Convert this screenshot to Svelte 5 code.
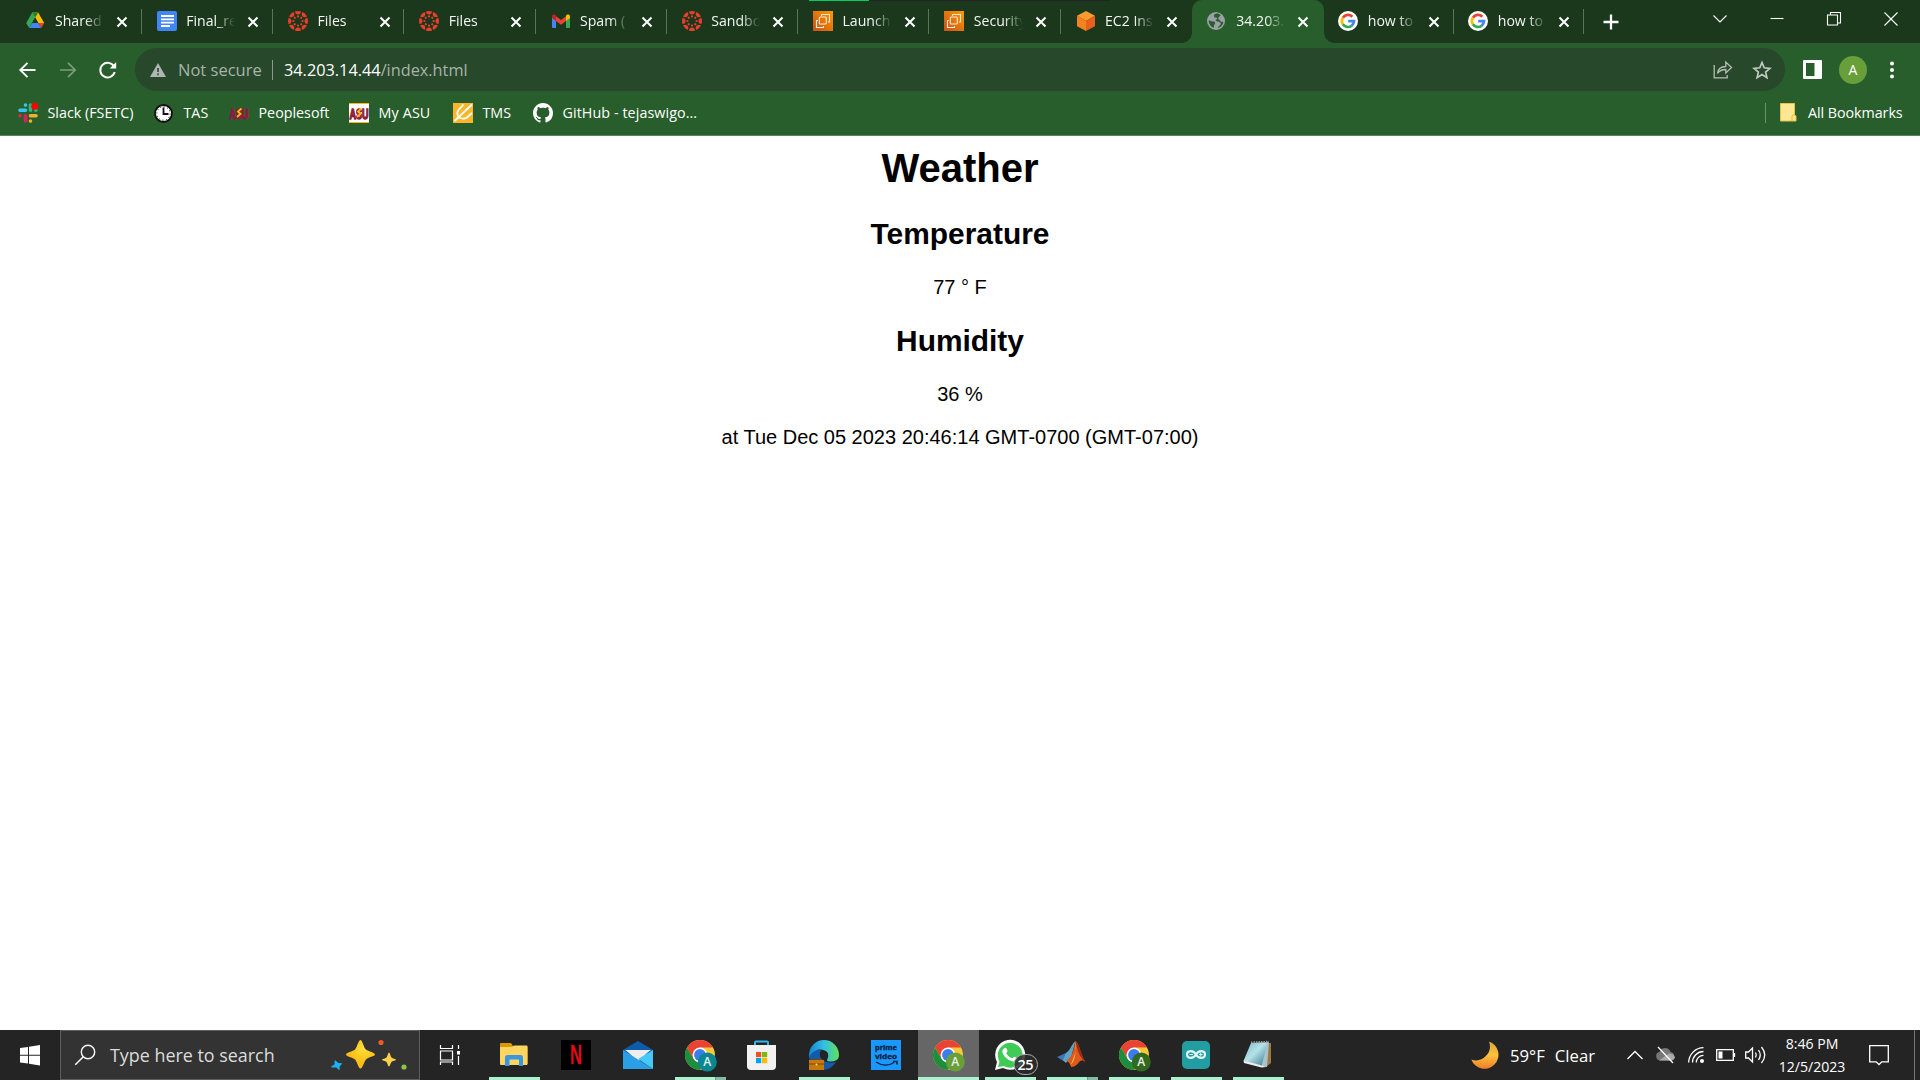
<script>
  const tabs = [
    { icon: 'drive', title: 'Shared' },
    { icon: 'docs', title: 'Final_re' },
    { icon: 'canvas', title: 'Files' },
    { icon: 'canvas', title: 'Files' },
    { icon: 'gmail', title: 'Spam (' },
    { icon: 'canvas', title: 'Sandbo' },
    { icon: 'aws', title: 'Launch' },
    { icon: 'aws', title: 'Security' },
    { icon: 'cube', title: 'EC2 Ins' },
    { icon: 'globe', title: '34.203.', active: true },
    { icon: 'google', title: 'how to' },
    { icon: 'google', title: 'how to' }
  ];

  const bookmarks = [
    { icon: 'slack', label: 'Slack (FSETC)', width: 136 },
    { icon: 'clock', label: 'TAS', width: 75 },
    { icon: 'asu', label: 'Peoplesoft', width: 120 },
    { icon: 'asuwhite', label: 'My ASU', width: 104 },
    { icon: 'tms', label: 'TMS', width: 80 },
    { icon: 'github', label: 'GitHub - tejaswigo...', width: 180 }
  ];

  const apps = [
    { icon: 'explorer', open: true },
    { icon: 'netflix' },
    { icon: 'mail' },
    { icon: 'chrome', badge: '#0b8793', open: true, stacked: true },
    { icon: 'store' },
    { icon: 'edge', open: true },
    { icon: 'prime' },
    { icon: 'chrome', badge: '#689f38', open: true, active: true },
    { icon: 'whatsapp', open: true },
    { icon: 'matlab', open: true, stacked: true },
    { icon: 'chrome', badge: '#33691e', open: true },
    { icon: 'arduino', open: true },
    { icon: 'notepad', open: true }
  ];

  const spokes = [0, 45, 90, 135, 180, 225, 270, 315];
</script>

{#snippet favicon(name)}
  <svg class="fav" width="20" height="20" viewBox="0 0 20 20">
    {#if name === 'drive'}
      <g transform="translate(-.8 -.6)">
        <path d="M7 2 1 12.500l3 5L10 7z" fill="#34a853" />
        <path d="M7 2h6l6 10.500h-6z" fill="#fbbc04" />
        <path d="M7 2h6l-3 5z" fill="#188038" />
        <path d="m10 7.200 3 5.300H7z" fill="#1b381c" />
        <path d="M7 12.500h6l3 5H4z" fill="#4285f4" />
        <path d="M13 12.500h6l-3 5z" fill="#ea4335" />
      </g>
    {:else if name === 'docs'}
      <rect width="20" height="20" rx="2" fill="#4285f4" />
      <path d="M4 5h13M4 8.300h13M4 11.700h13M4 15h9" stroke="#fff" stroke-width="1.800" />
    {:else if name === 'canvas'}
      {#each spokes as a}
        <g transform="rotate({a} 10 10)">
          <path d="M6.900.500a10 10 0 0 1 6.200 0C12.800 4.500 7.200 4.500 6.900.500" fill="#ee3d2c" />
          <circle cx="10" cy="5.400" r="1.100" fill="#ee3d2c" />
        </g>
      {/each}
    {:else if name === 'gmail'}
      <path d="M1 5v11a1 1 0 0 0 1 1h3V8z" fill="#4285f4" />
      <path d="M19 5v11a1 1 0 0 1-1 1h-3V8z" fill="#34a853" />
      <path d="M5 5.300 10 9l5-3.700V10l-5 3.800L5 10z" fill="#ea4335" />
      <path d="M1 5.500c0-2 2.300-2.400 3.400-1.500L5 4.500V10L1 7z" fill="#c5221f" />
      <path d="M19 5.500c0-2-2.300-2.400-3.400-1.500l-.6.500V10l4-3z" fill="#fbbc04" />
    {:else if name === 'aws'}
      <defs>
        <linearGradient id="awsfill" x1="0" y1="1" x2="1" y2="0">
          <stop offset="0" stop-color="#c8511b" /><stop offset="1" stop-color="#f90" />
        </linearGradient>
      </defs>
      <rect width="20" height="20" fill="url(#awsfill)" />
      <g fill="none" stroke="#ffe9d0" stroke-width="1.100">
        <path d="M8.500 5V3.500h8V11H15" /><rect x="6.300" y="6" width="7" height="7" rx="1" />
        <path d="M5 9.500H3.500v7h7V15" />
      </g>
    {:else if name === 'cube'}
      <path d="m10 0 9 4.800L10 10 1 4.800z" fill="#fb9a2d" />
      <path d="M1 4.800 10 10v10l-9-4.800z" fill="#f58220" />
      <path d="M19 4.800 10 10v10l9-4.800z" fill="#e8601c" />
    {:else if name === 'globe'}
      <circle cx="9" cy="10" r="9" fill="#9aa0a6" />
      <path d="M10.500 2.300C8 2.500 6.500 4 7 5.500c.4 1.200 1.800 1 2.800 1.300.8.300.4 1.500-.4 1.800-1.200.4-.6 1.700.6 1.800 1.700.1 3.600.3 3.800 2 .1 1.300-1 1.800-1.800 2.700-.6.700-.8 1.300-1.700 2 3.300-.4 5.700-3 6-6-1.500-.2-2.500-.2-3.300-1.500-.7-1.300-1.700-1-1.700-2.300 0-1.200 1.600-1.800 2.400-3-.9-1-2-1.700-3.200-2M1.700 9.500c0 3.500 2 6.200 5 7.300.5-1.300.1-1.800.5-2.800.5-1.200 1.400-1.700.8-2.800-.6-1-1.700-.7-2.700-.8-1.400-.2-1.800-1-3.600-.9" fill="#285e2c" />
    {:else if name === 'google'}
      <circle cx="10" cy="10" r="10" fill="#fff" />
      <g fill="none" stroke-width="2.700">
        <path d="M4.900 6.700A6 6 0 0 1 14.300 5.800" stroke="#ea4335" />
        <path d="M4.900 6.700a6 6 0 0 0 0 6.600" stroke="#fbbc05" />
        <path d="M4.900 13.300a6 6 0 0 0 8.600 1.500" stroke="#34a853" />
        <path d="M10.200 10.200H16a6 6 0 0 1-2.500 4.600" stroke="#4285f4" />
      </g>
    {:else if name === 'slack'}
      <g stroke-linecap="round" stroke-width="3.600">
        <path d="M2 7.200h5.500M7.500 2v.1" stroke="#36c5f0" />
        <path d="M12.500 7.200V2M17.800 7.200h.1" stroke="#2eb67d" />
        <path d="M12.500 12.800H18M12.500 18v.1" stroke="#ecb22e" />
        <path d="M7.500 12.800V18M2 12.800h.1" stroke="#e01e5a" />
      </g>
      <circle cx="16.700" cy="3.300" r="3.500" fill="#f00" />
    {:else if name === 'clock'}
      <circle cx="9.500" cy="10.500" r="8.500" fill="#fff" stroke="#111" stroke-width="1.800" />
      <circle cx="9.500" cy="10.500" r="6.700" fill="none" stroke="#111" stroke-width="1" stroke-dasharray="1 2.500" />
      <path d="M9.500 4.500v6.500h5" fill="none" stroke="#111" stroke-width="1.800" />
    {:else if name === 'asu' || name === 'asuwhite'}
      {#if name === 'asuwhite'}
        <rect width="20" height="20" fill="#fff" />
        <path d="M0 .500h20M0 19.500h20" stroke="#ffb310" />
      {/if}
      <text x=".5" y="15.500" textLength="19" lengthAdjust="spacingAndGlyphs" class="asu">ASU</text>
      <path d="m12.500 5.500-3.500 3 2.500 2.500-3.500 3" fill="none" stroke="#ffb310" stroke-width="1.800" />
    {:else if name === 'tms'}
      <rect width="20" height="20" fill="#fdb52a" />
      <g stroke="#fff" stroke-width="1.800" fill="none">
        <path d="M1.500 18 19 1.500" />
        <path d="M10.500 1.500 5.500 7q-2 2.500-.5 6.500" />
        <path d="M19 10l-5 4.500q-4 2.500-9-.5" />
      </g>
    {:else if name === 'github'}
      <path transform="scale(1.250)" fill="#fff" d="M8 0C3.580 0 0 3.580 0 8c0 3.540 2.290 6.530 5.470 7.590.4.070.55-.17.55-.38 0-.19-.01-.82-.01-1.490-2.010.37-2.530-.49-2.690-.94-.09-.23-.48-.94-.82-1.130-.28-.15-.68-.52-.01-.53.63-.01 1.080.58 1.230.82.72 1.210 1.870.87 2.330.66.07-.52.28-.87.51-1.070-1.780-.2-3.640-.89-3.640-3.950 0-.87.31-1.590.82-2.150-.08-.2-.36-1.020.08-2.120 0 0 .67-.21 2.200.82.64-.18 1.320-.27 2-.27s1.360.09 2 .27c1.530-1.040 2.200-.82 2.200-.82.44 1.100.16 1.920.08 2.120.51.56.82 1.270.82 2.150 0 3.070-1.870 3.750-3.650 3.950.29.25.54.73.54 1.480 0 1.070-.01 1.930-.01 2.200 0 .21.15.46.55.38A8.010 8.010 0 0 0 16 8c0-4.420-3.580-8-8-8" />
    {/if}
  </svg>
{/snippet}

{#snippet appicon(app)}
  <svg class="appicon" width="34" height="34" viewBox="0 0 34 34">
    {#if app.icon === 'explorer'}
      <path d="M3 5q0-1 1-1h10l2 3h13q1.500 0 1.500 1.500V25H3z" fill="#d99b00" />
      <path d="M3 8h12l2-1.500h12.500q1 0 1 1V25q0 1-1 1H4q-1 0-1-1z" fill="#ffd562" />
      <path d="M8 27V18.500Q8 16 10.500 16h13q2.500 0 2.500 2.500V27h-4v-6.500H12.500V27z" fill="#3a96dd" />
    {:else if app.icon === 'netflix'}
      <rect x="2" y="1" width="30" height="30" />
      <text x="11" y="25" textLength="12" lengthAdjust="spacingAndGlyphs" class="netflix">N</text>
    {:else if app.icon === 'mail'}
      <path d="M2 11 17 2l15 9v8H2z" fill="#0c5cab" />
      <path d="M5 11h24L17 23z" fill="#eee" />
      <path d="M2 11 32 30H2z" fill="#2b9fe6" />
      <path d="M32 11v19L17 20z" fill="#45c8fa" />
      <path d="M4 11h26L17 19.500z" fill="#eee" />
    {:else if app.icon === 'chrome'}
      <circle cx="17" cy="16" r="15" fill="#fcc934" />
      <path d="M4 8.500A15 15 0 0 1 30 8.500H17L10.500 19.800z" fill="#ea4335" />
      <path d="M4 8.500a15 15 0 0 0 13 22.500l6.500-11.300-13 .1z" fill="#1e8e3e" />
      <circle cx="17" cy="16" r="7.500" fill="#fff" />
      <circle cx="17" cy="16" r="5.900" fill="#3b7ded" />
      <circle cx="24.300" cy="23" r="9.500" fill={app.badge} />
      <text x="24.300" y="27.300" text-anchor="middle" class="letter">A</text>
    {:else if app.icon === 'store'}
      <path d="M10 8V3.500q0-1 1-1h11q1 0 1 1V8" fill="none" stroke="#30b6ec" stroke-width="2" />
      <path d="M2 6h29v21q0 4-4 4H6q-4 0-4-4z" fill="#f2f2f2" />
      <path d="M11 13h5.200v5.200H11z" fill="#f25022" /><path d="M17 13h5.200v5.200H17z" fill="#7fba00" />
      <path d="M11 19h5.200v5.200H11z" fill="#00a4ef" /><path d="M17 19h5.200v5.200H17z" fill="#ffb900" />
    {:else if app.icon === 'edge'}
      <defs>
        <linearGradient id="edgetop"><stop offset="0" stop-color="#1683d8" /><stop offset=".5" stop-color="#32bfe5" /><stop offset="1" stop-color="#62e256" /></linearGradient>
      </defs>
      <path d="M14 11c-4 7 3 15 15 12-3 5-8 8-13 8C8 31 3 26 2 18c1-5 7-8 12-7" fill="#135aa8" />
      <path d="M2 16a15 15 0 0 1 30 0c0 5-4 6.500-9 6.500-3 0-3.500-1-2.500-2.500C24 13 15 8 8 12c-3 1.500-5 3.500-6 7z" fill="url(#edgetop)" />
      <circle cx="17" cy="16" r="4" fill="#242424" />
      <rect x="2" y="21" width="15" height="10" fill="#c77a0c" />
      <path d="M2 25h15" stroke="#7d4500" /><path d="M5.500 21v-1.500h8V21" stroke="#7d4500" fill="none" />
      <circle cx="9.500" cy="25.500" r="1" fill="#ffe28a" />
    {:else if app.icon === 'prime'}
      <rect x="2" y="1" width="30" height="30" fill="#1a98ff" />
      <text x="6" y="11" textLength="22" lengthAdjust="spacingAndGlyphs" class="prime">prime</text>
      <text x="6" y="19.500" textLength="22" lengthAdjust="spacingAndGlyphs" class="prime">video</text>
      <path d="M7 23c6 4 13 4 18 .5M24 22.500h4v3" stroke="#06233d" stroke-width="1.500" fill="none" />
    {:else if app.icon === 'whatsapp'}
      <path d="M2 31 4 23A15 15 0 1 1 10 29z" fill="#fff" />
      <path d="M5 28 6.500 22.500A12.400 12.400 0 1 1 11 27z" fill="#3fcb55" />
      <path d="M11 9.500c1.500-1.500 2.700-.5 3.500 2.500.2 1-1.500 1.500-1 2.500 1.500 2.500 3 4 5.500 4.800 1 .3 1.500-2 2.500-1.600 3.500 1.400 3.500 2 2 3.800C20 25 9 18 9.300 12q.3-1.700 1.700-2.500" fill="#fff" />
      <rect x="21" y="15.500" width="23.500" height="20" rx="10" class="ring" />
      <text x="32.500" y="31" text-anchor="middle" textLength="16" class="count">25</text>
    {:else if app.icon === 'matlab'}
      <path d="m2 18 9-4 4 4-5 5z" fill="#3c78b8" />
      <path d="M11 14c4-2 5-8 9.500-12l-4 15-5.500 7-3-3z" fill="#5fa3c4" />
      <path d="M20.500 2c4 2 5 14 10 21-3-2-5-2-7 1-2 2-4 4-7.500 4-1-4-3-6-5-6 6-2 8-13 9.500-20" fill="#e0581c" />
      <path d="M20.500 2c2 7-1 16-5 24 4-3 6-12 5-24" fill="#ffc34d" />
      <path d="M20.500 2c4 2 5 14 10 21-4-3-8-9-10-21" fill="#972b13" />
    {:else if app.icon === 'arduino'}
      <rect x="3" y="2" width="28" height="28" rx="5" fill="#229ea3" />
      <path d="M17 15.500c-3-5-9-4-9 0s6 5 9 0 9-4 9 0-6 5-9 0z" fill="none" stroke="#e4f5f5" stroke-width="2.100" />
      <path d="M10.500 15.500h3.500M20 15.500h3.500M21.750 13.700v3.600" stroke="#e4f5f5" stroke-width="1" />
    {:else if app.icon === 'notepad'}
      <defs>
        <linearGradient id="noteface" x2="1" y2="1"><stop offset="0" stop-color="#77b9c7" /><stop offset=".45" stop-color="#b5e2ea" /><stop offset="1" stop-color="#2f7689" /></linearGradient>
      </defs>
      <path d="m27 4 3 0v20l-5 4z" fill="#9b7947" />
      <path d="m11 4 17-1-2 25-5-1z" fill="#a9c3c8" />
      <path d="M10 4 26.500 3.500 20.500 27 2.500 22z" fill="url(#noteface)" />
      <path d="m2.500 21.500 18.500 5 4.500 1.500-5 .5L3 24z" fill="#eee" />
      <path d="m10 3.500 18-.8" stroke="#999" stroke-width="2" stroke-dasharray="1.500 1" />
    {/if}
  </svg>
{/snippet}

<div class="desktop">
  <header class="browser">
    <div class="tabstrip">
      <div class="loading"></div>
      {#each tabs as tab, i}
        <div class="tab" class:active={tab.active} class:divided={!tab.active && i !== 8} class:narrow={i > 9}>
          {@render favicon(tab.icon)}
          <span class="title">{tab.title}</span>
          <svg class="close" width="12" height="12" viewBox="0 0 12 12"><path d="m1.500 1.500 9 9m0-9-9 9" stroke="#fff" stroke-width="2" /></svg>
        </div>
      {/each}
      <svg class="plus" width="16" height="16" viewBox="0 0 16 16"><path d="M8 .500v15M.500 8h15" stroke="#fff" stroke-width="2.300" /></svg>
      <div class="controls">
        <svg width="14" height="14" viewBox="0 0 14 14"><path d="m.500 3.500 6.500 6.500L13.500 3.500" /></svg>
        <svg width="14" height="14" viewBox="0 0 14 14"><path d="M.500 6.500h13" /></svg>
        <svg width="14" height="14" viewBox="0 0 14 14"><path d="M.500 3h10v10H.500zM3.500 3V.500h10v10.500h-3" /></svg>
        <svg width="14" height="14" viewBox="0 0 14 14"><path d="m.500 .500 13 13m0-13-13 13" /></svg>
      </div>
    </div>

    <div class="toolbar">
      <svg class="nav" width="18" height="18" viewBox="0 0 18 18"><path d="M16.500 9h-15m7-7.200L1.300 9l7.200 7.200" stroke="#fff" stroke-width="1.900" fill="none" /></svg>
      <svg class="nav" width="18" height="18" viewBox="0 0 18 18"><path d="M1 9h15M9 1.800 16.200 9 9 16.200" stroke="#7b9e7d" stroke-width="1.700" fill="none" /></svg>
      <svg class="nav" width="18" height="18" viewBox="0 0 18 18"><path d="M15 5.500A7.300 7.300 0 1 0 15.700 11" stroke="#fff" stroke-width="2" fill="none" /><path d="M17.200 1v6.500h-6.500z" fill="#fff" /></svg>
      <div class="omnibox">
        <svg width="16" height="14" viewBox="0 0 16 14"><path d="M8 0 16 14H0z" fill="#b0b6b0" /><path d="M8 5v4M8 10.500v1.700" stroke="#27482a" stroke-width="1.600" /></svg>
        <span class="warn">Not secure</span>
        <i class="bar"></i>
        <span class="url"><b>34.203.14.44</b>/index.html</span>
        <svg class="share" width="20" height="19" viewBox="0 0 20 19"><path d="M1.200 5v12.800h13V15M4.500 13.500C5 9 8 6.500 12.800 6.500V2L18.500 7.500 12.800 13V9.500C9 9.500 6.500 10.500 4.500 13.500z" stroke="#b4bdb5" stroke-width="1.300" fill="none" /></svg>
        <svg width="20" height="20" viewBox="0 0 20 20"><path d="m10 2.500 2.200 5.300 5.700.500-4.300 3.700 1.300 5.600-4.900-3-4.900 3L6.400 12 2.100 8.300l5.700-.5z" stroke="#c2c9c2" stroke-width="1.700" fill="none" /></svg>
      </div>
      <svg class="panel" width="19" height="19" viewBox="0 0 19 19"><path fill="#fff" fill-rule="evenodd" d="M1 0h17q1 0 1 1v17q0 1-1 1H1q-1 0-1-1V1q0-1 1-1m2 3v13h8.500V3z" /></svg>
      <span class="avatar">A</span>
      <svg width="6" height="18" viewBox="0 0 6 18"><g fill="#fff"><circle cx="3" cy="2.600" r="2" /><circle cx="3" cy="9" r="2" /><circle cx="3" cy="15.400" r="2" /></g></svg>
    </div>

    <nav class="bookmarks">
      {#each bookmarks as mark}
        <a class="mark" href="#top" style:width="{mark.width}px">{@render favicon(mark.icon)}<span>{mark.label}</span></a>
      {/each}
      <div class="all">
        <svg width="17" height="19" viewBox="0 0 17 19"><path d="M.500.500h14v11.500l1.500 1V18H.500z" fill="#ffe694" stroke="#e9c347" /><path d="M12 18v-4.500q0-1.500 1.500-1.500h1" fill="none" stroke="#e9b92c" /></svg>
        <span>All Bookmarks</span>
      </div>
    </nav>
  </header>

  <main>
    <h1>Weather</h1>
    <h2>Temperature</h2>
    <p>77 ° F</p>
    <h2>Humidity</h2>
    <p>36 %</p>
    <p>at Tue Dec 05 2023 20:46:14 GMT-0700 (GMT-07:00)</p>
  </main>

  <footer class="taskbar">
    <div class="start">
      <svg width="20" height="21" viewBox="0 0 20 21"><path fill="#fff" d="M0 3 8 1.900V9.700H0zM9 1.700 20 .1v9.600H9zM0 10.700h8v7.800l-8-1.100zM9 10.700h11v9.700L9 18.800z" /></svg>
    </div>
    <div class="search">
      <svg width="22" height="22" viewBox="0 0 22 22"><circle cx="13" cy="8" r="6.700" fill="none" stroke="#fff" stroke-width="1.400" /><path d="m8.300 12.800-8 8" stroke="#fff" stroke-width="1.500" /></svg>
      <span>Type here to search</span>
      <svg class="sparkle" width="76" height="32" viewBox="0 0 76 32">
        <defs><radialGradient id="gold" cx=".6" cy=".3"><stop offset="0" stop-color="#ffdf3e" /><stop offset="1" stop-color="#f9bd13" /></radialGradient></defs>
        <path d="M29.500 1c2 0 3 7.500 5.500 9.500s9 3 9 5-7 2.500-9 5-3.500 9-5.500 9-3.500-7-5.500-9-9-3-9-5 7-3 9-5 3.500-9.500 5.500-9.500" fill="url(#gold)" />
        <path d="M58 13.500c1 0 1.500 4 2.500 5s4.500 1.500 4.500 2.300-3.500 1.200-4.500 2.200-1.500 4.500-2.500 4.500-1.500-3.500-2.500-4.500-4.500-1.400-4.500-2.200 3.500-1.300 4.500-2.300 1.500-5 2.500-5" fill="#ffd04b" />
        <path d="M4 21.500c1-.4 2.500 2.300 3.500 2.600s3-.4 3.400.4-2.200 2.300-2.300 3.300.5 3-.3 3.300-2-2.200-3-2.500-4.700.4-5-.5 3-2 3.300-3-.6-3.300.4-3.600" fill="#18b2f5" />
        <circle cx="50" cy="3.500" r="2.600" fill="#f15a24" /><circle cx="73" cy="28" r="2.600" fill="#8bc53f" />
      </svg>
    </div>
    <div class="taskview">
      <svg width="20" height="20" viewBox="0 0 20 20" fill="none" stroke="#fff" stroke-width="1.200"><path d="M.500 0v3.500h12V0M.500 6h12v9H.500zM.500 20v-3h12v3M18.500 0v4M18.500 11v9" /><path d="M17 6h3v3.500h-3z" fill="#fff" stroke="none" /></svg>
    </div>
    {#each apps as app}
      <div class="app" class:open={app.open} class:stacked={app.stacked} class:current={app.active}>{@render appicon(app)}</div>
    {/each}
    <div class="tray">
      <svg width="28" height="28" viewBox="0 0 28 28">
        <defs><linearGradient id="moon" x2="0" y2="1"><stop offset="0" stop-color="#d9a441" /><stop offset=".5" stop-color="#fdc13b" /><stop offset="1" stop-color="#ee7d2b" /></linearGradient></defs>
        <path d="M18 .500A14 14 0 1 1 .300 18.500 14 14 0 0 0 18 .500" fill="url(#moon)" />
      </svg>
      <span class="weather"><span>59°F</span><span>Clear</span></span>
      <svg class="line caret" width="16" height="10" viewBox="0 0 16 10"><path d="m.500 9 7.500-7.500L15.500 9" /></svg>
      <svg class="cloud" width="20" height="18" viewBox="0 0 20 18"><path d="M5 14.500a4.500 4.500 0 0 1-.5-8.800A5.800 5.800 0 0 1 15.500 6a4.300 4.300 0 0 1 0 8.500z" fill="#777" /><path d="m4 14.500 10-7q5 0 6 4-1 3-4 3z" fill="#aaa" /><path d="m3 1 15 16" stroke="#fff" stroke-width="1.300" /></svg>
      <svg class="line wifi" width="16" height="16" viewBox="0 0 16 16"><path d="M.700 15.500A15 15 0 0 1 15.500.700M4.500 15.500a11 11 0 0 1 11-11M8.300 15.500a7.200 7.200 0 0 1 7.200-7.200" /><circle cx="14" cy="14" r="2" fill="#fff" stroke="none" /></svg>
      <svg class="line battery" width="20" height="12" viewBox="0 0 20 12"><path d="M.700.700h16.600v10.600H.700zM18.500 4v4" /><path d="M2.500 2.500h4v7h-4z" fill="#fff" stroke="none" /></svg>
      <svg class="line speaker" width="21" height="18" viewBox="0 0 21 18"><path d="M.700 6v6h2.800l4 4V2l-4 4zM10.500 6.500q1.500 2.500 0 5M13.500 4q3.500 5 0 10M16.500 1q6.500 8 0 16" /></svg>
      <span class="time"><span>8:46 PM</span><span>12/5/2023</span></span>
      <svg class="line note" width="20" height="20" viewBox="0 0 20 20"><path d="M.700.700h18.600v16.100h-6.500L10 19.500l-2.800-2.700H.700z" /></svg>
      <i class="edge"></i>
    </div>
  </footer>
</div>

<style>
  :global(body) { margin: 0; background: #fff; }
  .desktop { width: 1920px; height: 1080px; display: flex; flex-direction: column; overflow: hidden; font-family: 'Open Sans', 'Noto Sans', sans-serif; color: #fff; }
  svg { display: block; flex: none; overflow: visible; }

  .browser { flex: none; height: 135px; background: #285e2c; border-bottom: 1px solid #5c845f; }
  .tabstrip { position: relative; height: 43px; background: #1b381c; display: flex; align-items: center; padding-left: 10.500px; box-sizing: border-box; }
  .loading { position: absolute; top: 0; left: 809px; width: 301px; height: 1px; background: linear-gradient(90deg, #0c6 60px, #232428 60px); }
  .tab { position: relative; flex: none; width: 131.250px; height: 43px; padding: 0 0 1px 15px; box-sizing: border-box; display: flex; align-items: center; }
  .tab.divided::after { content: ''; position: absolute; right: 0; top: 9px; width: 1px; height: 25px; background: #5a745b; }
  .tab.active { width: 132.500px; background: #285e2c; border-radius: 10px 10px 0 0; }
  .tab.narrow { width: 130px; padding-left: 14px; }
  .tab.active::before, .tab.active::after { content: ''; position: absolute; bottom: 0; width: 10px; height: 10px; }
  .tab.active::before { left: -10px; background: radial-gradient(circle at 0 0, #1b381c 9.500px, #285e2c 10px); }
  .tab.active::after { right: -10px; background: radial-gradient(circle at 100% 0, #1b381c 9.500px, #285e2c 10px); }
  .title { width: 56px; margin-left: 9.500px; overflow: hidden; white-space: nowrap; font-size: 14.100px; line-height: 24px; color: #f4f7f4; mask-image: linear-gradient(90deg, #000 30px, transparent 49px); }
  .close { margin-left: 5px; margin-top: 1px; }
  .narrow .close { margin-left: 4px; }
  .plus { margin-left: 19px; }
  .controls { display: flex; margin-left: auto; margin-bottom: 5px; }
  .controls svg { margin: 0 21.600px; fill: none; stroke: #fff; stroke-width: 1.100; }

  .toolbar { height: 53px; display: flex; align-items: center; padding: 0 24.500px 0 18.500px; }
  .toolbar > .nav { margin-right: 22px; }
  .toolbar > .nav:nth-child(3) { margin-right: 18.500px; }
  .omnibox { width: 1650px; height: 43px; border-radius: 22px; background: #27482a; display: flex; align-items: center; box-sizing: border-box; padding: 0 13px 0 15px; font-size: 16.300px; color: #a8b4a9; white-space: nowrap; }
  .warn { margin-left: 12px; width: 94px; font-size: 16.500px; }
  .bar { width: 1px; height: 20px; margin-right: 11px; background: #8b9b8c; }
  .url b { font-weight: 400; color: #fff; }
  .share { margin-left: auto; margin-right: 19px; }
  .panel { margin-left: 18px; }
  .avatar { width: 28px; height: 28px; margin: 0 22px 0 17px; border-radius: 50%; background: #689f38; font-size: 14px; line-height: 28px; text-align: center; }

  .bookmarks { height: 33px; display: flex; align-items: center; padding: 0 18px; font-size: 14.300px; white-space: nowrap; }
  .mark { display: flex; align-items: center; gap: 9.500px; color: #fff; text-decoration: none; }
  .mark:nth-child(4) { letter-spacing: .15px; }
  .mark:nth-child(6) { letter-spacing: .08px; }
  .all { margin-left: auto; width: 137px; height: 20px; box-sizing: border-box; padding-left: 14px; border-left: 1px solid #6b936e; display: flex; align-items: center; gap: 11px; letter-spacing: -.05px; }
  .asu { font: bold 14px 'Liberation Sans', sans-serif; letter-spacing: 0; fill: #8c1d40; stroke: #8c1d40; stroke-width: 1.400px; }

  main { flex: 1; padding-top: 10px; color: #000; text-align: center; font: 20px 'Liberation Sans', Arial, sans-serif; }
  h1 { margin: 0 0 26px; font-size: 40px; }
  h2 { margin: 25px 0; font-size: 29.900px; }
  p { margin: 20px 0; }

  .taskbar { flex: none; height: 50px; background: #242424; display: flex; align-items: center; }
  .start { width: 60px; display: flex; justify-content: center; }
  .search { width: 360px; height: 50px; box-sizing: border-box; border: 1px solid #5e5e5e; background: #333; display: flex; align-items: center; padding: 0 12px 0 14px; color: #dcdcdc; font-size: 17.900px; white-space: nowrap; }
  .search span { margin: 0 0 1px 13px; }
  .sparkle { margin-left: auto; }
  .taskview { width: 63px; padding-left: 20px; box-sizing: border-box; }
  .app { position: relative; width: 62px; height: 50px; flex: none; display: flex; justify-content: center; padding-top: 9px; box-sizing: border-box; }
  .app.open::after { content: ''; position: absolute; bottom: 0; left: 5.500px; right: 5.500px; height: 3px; background: #a8f2cf; }
  .app.stacked::after { background: linear-gradient(90deg, #a8f2cf 40px, #4f8068 40px, #82bca4 41px); }
  .app.current { background: linear-gradient(90deg, transparent 1px, #666 1px); }
  .app.current::after { left: 1px; right: 0; }
  .netflix { font: bold 27px 'Liberation Sans', sans-serif; fill: #e50914; }
  .letter { font-size: 12px; font-weight: 600; fill: #e8eee8; }
  .prime { font-size: 7px; font-weight: 700; fill: #06233d; stroke: #06233d; stroke-width: .3px; }
  .ring { fill: #2b2b2b; fill-opacity: .85; stroke: #aaa; }
  .count { font-size: 14.500px; font-weight: 600; fill: #fff; }

  .tray { margin-left: auto; width: 449px; display: flex; align-items: center; white-space: nowrap; }
  .weather { display: flex; justify-content: space-between; width: 85px; margin: 0 1px 0 11px; font-size: 16.700px; }
  .line { fill: none; stroke: #fff; stroke-width: 1.300; }
  .caret { margin-left: 31px; }
  .cloud { margin-left: 12px; }
  .wifi { margin-left: 13px; }
  .battery { margin-left: 12px; }
  .speaker { margin-left: 9px; }
  .time { display: flex; flex-direction: column; align-items: center; width: 68px; margin-left: 12px; font-size: 14.100px; line-height: 23px; }
  .note { margin-left: 23px; }
  .edge { width: 1px; height: 50px; margin-left: 25px; background: #777; }
</style>
